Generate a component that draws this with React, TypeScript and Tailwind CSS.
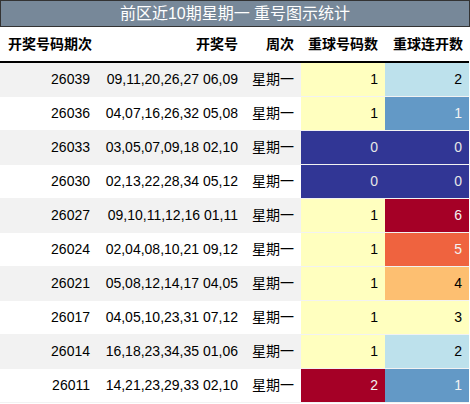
const rows = [
  { id: '26039', nums: '09,11,20,26,27 06,09', day: '星期一', rep: 1, run: 2 },
  { id: '26036', nums: '04,07,16,26,32 05,08', day: '星期一', rep: 1, run: 1 },
  { id: '26033', nums: '03,05,07,09,18 02,10', day: '星期一', rep: 0, run: 0 },
  { id: '26030', nums: '02,13,22,28,34 05,12', day: '星期一', rep: 0, run: 0 },
  { id: '26027', nums: '09,10,11,12,16 01,11', day: '星期一', rep: 1, run: 6 },
  { id: '26024', nums: '02,04,08,10,21 09,12', day: '星期一', rep: 1, run: 5 },
  { id: '26021', nums: '05,08,12,14,17 04,05', day: '星期一', rep: 1, run: 4 },
  { id: '26017', nums: '04,05,10,23,31 07,12', day: '星期一', rep: 1, run: 3 },
  { id: '26014', nums: '16,18,23,34,35 01,06', day: '星期一', rep: 1, run: 2 },
  { id: '26011', nums: '14,21,23,29,33 02,10', day: '星期一', rep: 2, run: 1 },
]

// 重球号码数 0..2
const repColor: Record<number, string> = {
  0: 'bg-[#313695] text-[#e6e6e6]',
  1: 'bg-[#ffffbf] text-black',
  2: 'bg-[#a50026] text-[#f2f2f2]',
}

// 重球连开数 0..6
const runColor: Record<number, string> = {
  0: 'bg-[#313695] text-[#e6e6e6]',
  1: 'bg-[#6399c6] text-[#f2f2f2]',
  2: 'bg-[#bde1ec] text-black',
  3: 'bg-[#ffffbf] text-black',
  4: 'bg-[#fdbf71] text-black',
  5: 'bg-[#ef633f] text-[#f2f2f2]',
  6: 'bg-[#a50026] text-[#f2f2f2]',
}

export default function App() {
  return (
    <div className="w-[470px] h-[404px] bg-white overflow-hidden font-['Liberation_Sans','Noto_Sans_CJK_SC',sans-serif] text-[14px] text-black">
      {/* 标题 */}
      <div className="h-[27px] border border-[#333] bg-[#778899] text-white text-[16px] leading-[25px] text-center">
        前区近10期星期一 重号图示统计
      </div>

      <table className="w-[469px] table-fixed border-collapse">
        <colgroup>
          <col className="w-[99px]" />
          <col className="w-[146px]" />
          <col className="w-[56px]" />
          <col className="w-[84px]" />
          <col className="w-[84px]" />
        </colgroup>
        <thead>
          <tr className="h-[35px] border-b-[2px] border-black font-bold">
            <th className="text-left pl-[8px] font-bold">开奖号码期次</th>
            <th className="text-right pr-[7px] font-bold">开奖号</th>
            <th className="text-right pr-[7px] font-bold">周次</th>
            <th className="text-right pr-[7px] font-bold">重球号码数</th>
            <th className="text-right pr-[6px] font-bold">重球连开数</th>
          </tr>
        </thead>
        <tbody>
          {rows.map((r, i) => (
            <tr
              key={r.id}
              className={`h-[34px] border-b border-[#f2f2f2] ${i % 2 === 0 ? 'bg-[#f2f2f2]' : 'bg-white'}`}
            >
              <td className="text-right pr-[9px]">{r.id}</td>
              <td className="text-right pr-[7px] whitespace-nowrap">{r.nums}</td>
              <td className="text-right pr-[7px]">{r.day}</td>
              <td className={`text-right pr-[7px] ${repColor[r.rep]}`}>{r.rep}</td>
              <td className={`text-right pr-[7px] ${runColor[r.run]}`}>{r.run}</td>
            </tr>
          ))}
        </tbody>
      </table>
    </div>
  )
}
